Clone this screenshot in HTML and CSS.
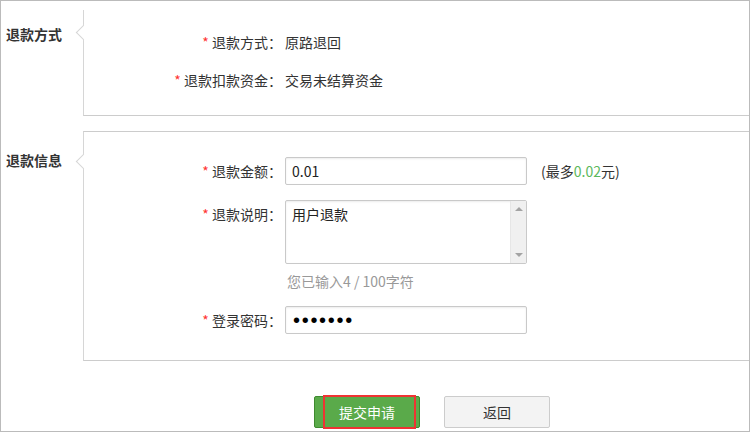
FILE: index.html
```html
<!DOCTYPE html>
<html lang="zh-CN">
<head>
    <meta charset="UTF-8">
    <meta name="viewport" content="width=device-width, initial-scale=1.0">
    <title>退款申请</title>
    <link rel="stylesheet" href="styles.css">
</head>
<body>
    <div class="frame">
        <!-- 退款方式 -->
        <div class="block block-way">
            <div class="block-title">退款方式</div>
            <div class="block-body">
                <span class="notch"></span>
                <div class="row">
                    <label class="row-label"><em>*</em> 退款方式：</label>
                    <span class="row-value">原路退回</span>
                </div>
                <div class="row">
                    <label class="row-label"><em>*</em> 退款扣款资金：</label>
                    <span class="row-value">交易未结算资金</span>
                </div>
            </div>
        </div>

        <!-- 退款信息 -->
        <div class="block block-info">
            <div class="block-title">退款信息</div>
            <div class="block-body">
                <span class="notch"></span>
                <div class="row row-field">
                    <label class="row-label" for="amount"><em>*</em> 退款金额：</label>
                    <input class="field" type="text" id="amount" value="0.01">
                    <span class="row-tip">(最多<b class="num">0.02</b>元)</span>
                </div>
                <div class="row row-memo">
                    <label class="row-label" for="memo"><em>*</em> 退款说明：</label>
                    <div class="memo">
                        <textarea id="memo">用户退款</textarea>
                        <div class="memo-bar">
                            <span class="arrow-up"></span>
                            <span class="arrow-down"></span>
                        </div>
                    </div>
                </div>
                <div class="row-hint">您已输入4 / 100字符</div>
                <div class="row row-field">
                    <label class="row-label" for="pwd"><em>*</em> 登录密码：</label>
                    <input class="field field-pwd" type="password" id="pwd" value="1234567">
                </div>
            </div>
        </div>

        <!-- 操作按钮 -->
        <div class="actions">
            <button class="btn btn-submit">提交申请<span class="mark"></span></button>
            <button class="btn btn-back">返回</button>
        </div>
    </div>
</body>
</html>
```

FILE: styles.css
```css
* {
    box-sizing: border-box;
}

body {
    margin: 0;
    padding: 0;
    background-color: #fff;
    color: #333;
    font-family: "Noto Sans CJK SC", sans-serif;
    font-size: 14px;
}

.frame {
    width: 750px;
    height: 432px;
    border: 1px solid #bbb;
    overflow: hidden;
}

.block {
    display: flex;
}

.block-way {
    margin-top: 9px;
}

.block-info {
    margin-top: 15px;
}

.block-title {
    width: 82px;
    padding-left: 5px;
    font-weight: bold;
    line-height: 20px;
}

.block-way .block-title {
    padding-top: 14px;
}

.block-info .block-title {
    padding-top: 19px;
}

.block-body {
    flex: 1;
    position: relative;
    border-left: 1px solid #d6d6d6;
    border-bottom: 1px solid #ccc;
}

.block-way .block-body {
    height: 106px;
    padding-top: 22px;
}

.block-info .block-body {
    height: 230px;
    border-top: 1px solid #ccc;
    padding-top: 25px;
}

/* small arrow on the left edge of each panel */
.notch {
    position: absolute;
    left: -6px;
    width: 11px;
    height: 11px;
    background-color: #fff;
    border-left: 1px solid #d6d6d6;
    border-bottom: 1px solid #d6d6d6;
    transform: rotate(45deg);
}

.block-way .notch {
    top: 17px;
}

.block-info .notch {
    top: 24px;
}

.row {
    display: flex;
    align-items: center;
    line-height: 20px;
}

.block-way .row + .row {
    margin-top: 18px;
}

.row-label {
    width: 198px;
    margin-right: 3px;
    text-align: right;
}

.row-label em {
    font-style: normal;
    color: #f33;
}

.row-field {
    height: 28px;
}

.field {
    width: 242px;
    height: 28px;
    padding: 0 6px;
    border: 1px solid #c9c9c9;
    border-radius: 2px;
    box-shadow: inset 0 1px 2px rgba(0, 0, 0, 0.08);
    font-family: "Noto Sans CJK SC", sans-serif;
    font-size: 14px;
    color: #222;
    outline: none;
}

.field-pwd {
    padding-left: 7px;
    font-family: "Liberation Sans", sans-serif;
    font-size: 20px;
    letter-spacing: 1.7px;
    color: #000;
}

.row-tip {
    margin-left: 14px;
}

.row-tip .num {
    font-weight: normal;
    color: #5cb85c;
}

.row-memo {
    align-items: flex-start;
    margin-top: 15px;
}

.row-memo .row-label {
    padding-top: 4px;
}

.memo {
    display: flex;
    width: 242px;
    height: 64px;
    border: 1px solid #c9c9c9;
    border-radius: 2px;
    box-shadow: inset 0 1px 2px rgba(0, 0, 0, 0.08);
}

.memo textarea {
    flex: 1;
    border: none;
    resize: none;
    padding: 3px 6px;
    background: transparent;
    font-family: "Noto Sans CJK SC", sans-serif;
    font-size: 14px;
    line-height: 20px;
    color: #222;
    outline: none;
}

.memo-bar {
    width: 16px;
    display: flex;
    flex-direction: column;
    justify-content: space-between;
    align-items: center;
    padding: 6px 0;
    background-color: #f0f0f0;
    border-left: 1px solid #e6e6e6;
}

.arrow-up,
.arrow-down {
    width: 0;
    height: 0;
    border-left: 4px solid transparent;
    border-right: 4px solid transparent;
}

.arrow-up {
    border-bottom: 4px solid #a3a3a3;
}

.arrow-down {
    border-top: 4px solid #a3a3a3;
}

.row-hint {
    margin: 7px 0 15px 203px;
    line-height: 20px;
    color: #999;
}

.actions {
    display: flex;
    gap: 24px;
    padding: 35px 0 0 313px;
}

.btn {
    position: relative;
    width: 106px;
    height: 32px;
    border-radius: 2px;
    font-family: "Noto Sans CJK SC", sans-serif;
    font-size: 14px;
    cursor: pointer;
}

.btn-submit {
    background-color: #5aaa4a;
    border: 1px solid #3e8a2f;
    color: #fff;
}

.btn-back {
    background-color: #f3f3f3;
    border: 1px solid #ccc;
    color: #333;
}

/* red highlight box drawn over the submit button */
.mark {
    position: absolute;
    left: 8px;
    right: 3px;
    top: -2px;
    bottom: -2px;
    border: 2px solid #ee3333;
}
```
